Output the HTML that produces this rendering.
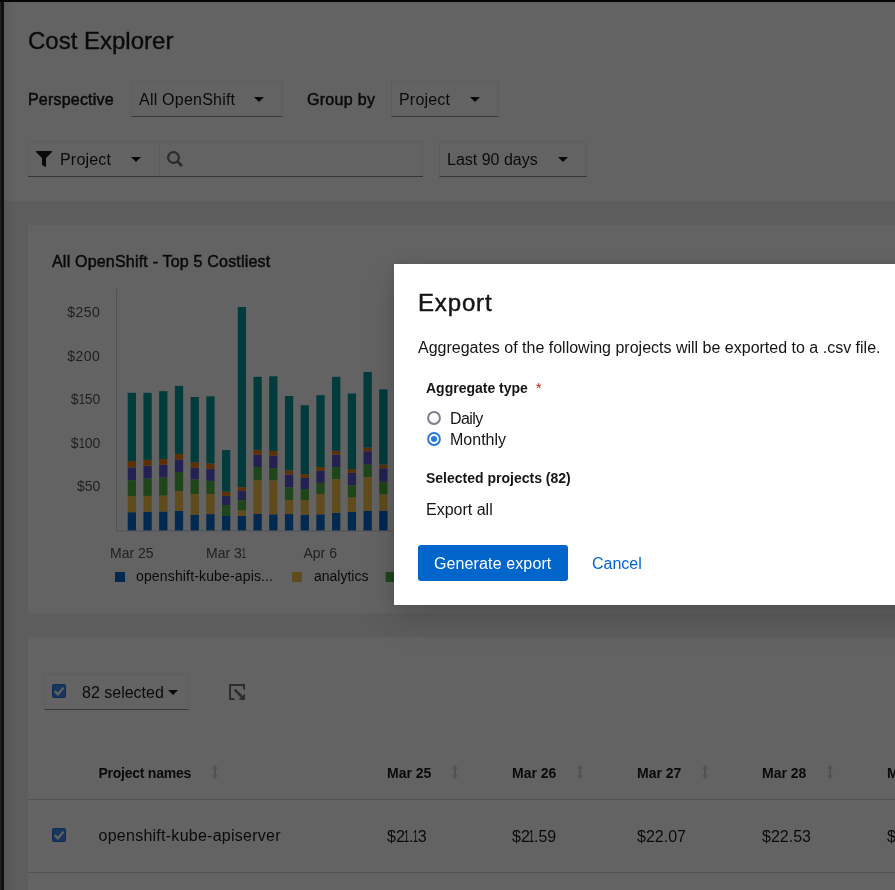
<!DOCTYPE html>
<html><head><meta charset="utf-8">
<style>
html,body{margin:0;padding:0;}
body{width:895px;height:890px;overflow:hidden;position:relative;background:#f0f0f0;font-family:"Liberation Sans",sans-serif;color:#151515;}
.a{position:absolute;white-space:nowrap;line-height:1;}
.hdr{position:absolute;left:0;top:0;width:895px;height:201px;background:#fff;}
.card{position:absolute;background:#fff;}
.sel{position:absolute;box-sizing:border-box;border:1px solid #f0f0f0;border-bottom-color:#8a8d90;background:#fff;}
.caret{position:absolute;width:0;height:0;border-left:5px solid transparent;border-right:5px solid transparent;border-top:5px solid #151515;}
.f16{font-size:16px;}
.f14{font-size:14px;}
.b{font-weight:700;}
.m{-webkit-text-stroke:0.5px #151515;}
i.o{font-style:normal;display:inline-block;transform:scaleX(0.62);margin:0 -2.35px;}
i.o1{font-style:normal;display:inline-block;transform:scaleX(0.8);margin:0 -0.75px;}
i.o2{font-style:normal;display:inline-block;transform:scaleX(0.6);margin:0 -2.2px;}
#overlay{position:absolute;left:0;top:0;width:895px;height:890px;background:rgba(3,3,3,0.62);}
.modal{position:absolute;left:394px;top:264px;width:600px;height:341px;background:#fff;box-shadow:0 16px 32px 0 rgba(3,3,3,0.16),0 0 8px 0 rgba(3,3,3,0.1);}
.axl{fill:#4f5255;font-size:14px;font-family:"Liberation Sans",sans-serif;}
</style></head><body>
<div id="root" style="position:absolute;left:0;top:0;width:895px;height:890px;overflow:hidden;will-change:transform;">
<div class="hdr"></div>
<div class="a" style="left:28px;top:29.2px;font-size:24px;-webkit-text-stroke:0.35px #151515;">Cost Explorer</div>
<div class="a f16 m" style="left:28px;top:91.8px;letter-spacing:0.2px;">Perspective</div>
<div class="sel" style="left:131px;top:81px;width:152px;height:36px;"></div>
<div class="a f16" style="left:139px;top:92.1px;letter-spacing:0.22px;">All OpenShift</div>
<div class="caret" style="left:254px;top:97px;"></div>
<div class="a f16 m" style="left:307px;top:91.8px;letter-spacing:0.3px;">Group by</div>
<div class="sel" style="left:391px;top:81px;width:108px;height:36px;"></div>
<div class="a f16" style="left:399px;top:92.1px;letter-spacing:0.2px;">Project</div>
<div class="caret" style="left:470px;top:97px;"></div>

<div class="sel" style="left:28px;top:141px;width:132px;height:36px;"></div>
<svg style="position:absolute;left:36px;top:151px" width="16" height="16" viewBox="0 0 512 512"><path fill="#151515" d="M487.976 0H24.028C2.71 0-8.047 25.866 7.058 40.971L192 225.941V432c0 7.831 3.821 15.17 10.237 19.662l80 55.98C298.02 518.69 320 507.493 320 487.98V225.941l184.947-184.97C520.021 25.896 509.338 0 487.976 0z"/></svg>
<div class="a f16" style="left:60px;top:152.1px;letter-spacing:0.2px;">Project</div>
<div class="caret" style="left:131px;top:157px;"></div>
<div class="sel" style="left:159px;top:141px;width:264px;height:36px;"></div>
<svg style="position:absolute;left:166px;top:150px" width="18" height="18" viewBox="0 0 18 18"><circle cx="7.5" cy="7.5" r="5.4" fill="none" stroke="#6a6e73" stroke-width="2.2"/><path d="M11.3 11.3L16 16" stroke="#6a6e73" stroke-width="2.8"/></svg>
<div style="position:absolute;left:28px;top:176px;width:395px;height:1px;background:#8a8d90;"></div>
<div class="sel" style="left:439px;top:141px;width:148px;height:36px;"></div>
<div class="a f16" style="left:447px;top:152.1px;">Last 90 days</div>
<div class="caret" style="left:558px;top:157px;"></div>

<div class="card" style="left:28px;top:225px;width:900px;height:388px;"></div>
<div class="a f16 m" style="left:52px;top:253.8px;letter-spacing:0.2px;">All OpenShift - Top 5 Costliest</div>
<svg style="position:absolute;left:0;top:0" width="895" height="890">
<line x1="116.5" y1="289" x2="116.5" y2="531" stroke="#d2d2d2" stroke-width="1"/>
<line x1="116" y1="530.9" x2="400" y2="530.9" stroke="#d2d2d2" stroke-width="1"/>
<rect x="127.70" y="512.20" width="8.3" height="18.20" fill="#06c"/>
<rect x="127.70" y="496.10" width="8.3" height="16.10" fill="#f4c145"/>
<rect x="127.70" y="480.20" width="8.3" height="15.90" fill="#4cb140"/>
<rect x="127.70" y="467.40" width="8.3" height="12.80" fill="#5752d1"/>
<rect x="127.70" y="461.00" width="8.3" height="6.40" fill="#ec7a08"/>
<rect x="127.70" y="392.80" width="8.3" height="68.20" fill="#009596"/>
<rect x="143.42" y="511.70" width="8.3" height="18.70" fill="#06c"/>
<rect x="143.42" y="495.90" width="8.3" height="15.80" fill="#f4c145"/>
<rect x="143.42" y="478.40" width="8.3" height="17.50" fill="#4cb140"/>
<rect x="143.42" y="465.70" width="8.3" height="12.70" fill="#5752d1"/>
<rect x="143.42" y="459.90" width="8.3" height="5.80" fill="#ec7a08"/>
<rect x="143.42" y="392.80" width="8.3" height="67.10" fill="#009596"/>
<rect x="159.14" y="511.50" width="8.3" height="18.90" fill="#06c"/>
<rect x="159.14" y="495.60" width="8.3" height="15.90" fill="#f4c145"/>
<rect x="159.14" y="477.40" width="8.3" height="18.20" fill="#4cb140"/>
<rect x="159.14" y="464.70" width="8.3" height="12.70" fill="#5752d1"/>
<rect x="159.14" y="458.90" width="8.3" height="5.80" fill="#ec7a08"/>
<rect x="159.14" y="391.20" width="8.3" height="67.70" fill="#009596"/>
<rect x="174.86" y="510.90" width="8.3" height="19.50" fill="#06c"/>
<rect x="174.86" y="491.00" width="8.3" height="19.90" fill="#f4c145"/>
<rect x="174.86" y="472.10" width="8.3" height="18.90" fill="#4cb140"/>
<rect x="174.86" y="459.70" width="8.3" height="12.40" fill="#5752d1"/>
<rect x="174.86" y="453.90" width="8.3" height="5.80" fill="#ec7a08"/>
<rect x="174.86" y="385.90" width="8.3" height="68.00" fill="#009596"/>
<rect x="190.58" y="514.60" width="8.3" height="15.80" fill="#06c"/>
<rect x="190.58" y="494.00" width="8.3" height="20.60" fill="#f4c145"/>
<rect x="190.58" y="479.40" width="8.3" height="14.60" fill="#4cb140"/>
<rect x="190.58" y="467.80" width="8.3" height="11.60" fill="#5752d1"/>
<rect x="190.58" y="462.20" width="8.3" height="5.60" fill="#ec7a08"/>
<rect x="190.58" y="397.00" width="8.3" height="65.20" fill="#009596"/>
<rect x="206.30" y="514.10" width="8.3" height="16.30" fill="#06c"/>
<rect x="206.30" y="494.00" width="8.3" height="20.10" fill="#f4c145"/>
<rect x="206.30" y="480.90" width="8.3" height="13.10" fill="#4cb140"/>
<rect x="206.30" y="468.80" width="8.3" height="12.10" fill="#5752d1"/>
<rect x="206.30" y="463.50" width="8.3" height="5.30" fill="#ec7a08"/>
<rect x="206.30" y="396.30" width="8.3" height="67.20" fill="#009596"/>
<rect x="222.02" y="516.00" width="8.3" height="14.40" fill="#06c"/>
<rect x="222.02" y="505.00" width="8.3" height="11.00" fill="#4cb140"/>
<rect x="222.02" y="495.90" width="8.3" height="9.10" fill="#5752d1"/>
<rect x="222.02" y="491.50" width="8.3" height="4.40" fill="#ec7a08"/>
<rect x="222.02" y="450.10" width="8.3" height="41.40" fill="#009596"/>
<rect x="237.74" y="516.00" width="8.3" height="14.40" fill="#06c"/>
<rect x="237.74" y="510.30" width="8.3" height="5.70" fill="#f4c145"/>
<rect x="237.74" y="500.20" width="8.3" height="10.10" fill="#4cb140"/>
<rect x="237.74" y="490.80" width="8.3" height="9.40" fill="#5752d1"/>
<rect x="237.74" y="487.10" width="8.3" height="3.70" fill="#ec7a08"/>
<rect x="237.74" y="307.00" width="8.3" height="180.10" fill="#009596"/>
<rect x="253.46" y="514.00" width="8.3" height="16.40" fill="#06c"/>
<rect x="253.46" y="480.10" width="8.3" height="33.90" fill="#f4c145"/>
<rect x="253.46" y="467.00" width="8.3" height="13.10" fill="#4cb140"/>
<rect x="253.46" y="454.80" width="8.3" height="12.20" fill="#5752d1"/>
<rect x="253.46" y="449.90" width="8.3" height="4.90" fill="#ec7a08"/>
<rect x="253.46" y="376.80" width="8.3" height="73.10" fill="#009596"/>
<rect x="269.18" y="514.30" width="8.3" height="16.10" fill="#06c"/>
<rect x="269.18" y="480.40" width="8.3" height="33.90" fill="#f4c145"/>
<rect x="269.18" y="468.10" width="8.3" height="12.30" fill="#4cb140"/>
<rect x="269.18" y="455.60" width="8.3" height="12.50" fill="#5752d1"/>
<rect x="269.18" y="450.90" width="8.3" height="4.70" fill="#ec7a08"/>
<rect x="269.18" y="376.30" width="8.3" height="74.60" fill="#009596"/>
<rect x="284.90" y="514.10" width="8.3" height="16.30" fill="#06c"/>
<rect x="284.90" y="499.90" width="8.3" height="14.20" fill="#f4c145"/>
<rect x="284.90" y="487.30" width="8.3" height="12.60" fill="#4cb140"/>
<rect x="284.90" y="474.60" width="8.3" height="12.70" fill="#5752d1"/>
<rect x="284.90" y="470.30" width="8.3" height="4.30" fill="#ec7a08"/>
<rect x="284.90" y="396.00" width="8.3" height="74.30" fill="#009596"/>
<rect x="300.62" y="514.60" width="8.3" height="15.80" fill="#06c"/>
<rect x="300.62" y="500.10" width="8.3" height="14.50" fill="#f4c145"/>
<rect x="300.62" y="489.00" width="8.3" height="11.10" fill="#4cb140"/>
<rect x="300.62" y="477.90" width="8.3" height="11.10" fill="#5752d1"/>
<rect x="300.62" y="474.10" width="8.3" height="3.80" fill="#ec7a08"/>
<rect x="300.62" y="405.20" width="8.3" height="68.90" fill="#009596"/>
<rect x="316.34" y="514.30" width="8.3" height="16.10" fill="#06c"/>
<rect x="316.34" y="494.00" width="8.3" height="20.30" fill="#f4c145"/>
<rect x="316.34" y="482.90" width="8.3" height="11.10" fill="#4cb140"/>
<rect x="316.34" y="470.80" width="8.3" height="12.10" fill="#5752d1"/>
<rect x="316.34" y="467.00" width="8.3" height="3.80" fill="#ec7a08"/>
<rect x="316.34" y="395.20" width="8.3" height="71.80" fill="#009596"/>
<rect x="332.06" y="512.80" width="8.3" height="17.60" fill="#06c"/>
<rect x="332.06" y="479.10" width="8.3" height="33.70" fill="#f4c145"/>
<rect x="332.06" y="467.00" width="8.3" height="12.10" fill="#4cb140"/>
<rect x="332.06" y="454.60" width="8.3" height="12.40" fill="#5752d1"/>
<rect x="332.06" y="450.90" width="8.3" height="3.70" fill="#ec7a08"/>
<rect x="332.06" y="376.80" width="8.3" height="74.10" fill="#009596"/>
<rect x="347.78" y="512.00" width="8.3" height="18.40" fill="#06c"/>
<rect x="347.78" y="497.40" width="8.3" height="14.60" fill="#f4c145"/>
<rect x="347.78" y="485.20" width="8.3" height="12.20" fill="#4cb140"/>
<rect x="347.78" y="472.90" width="8.3" height="12.30" fill="#5752d1"/>
<rect x="347.78" y="469.00" width="8.3" height="3.90" fill="#ec7a08"/>
<rect x="347.78" y="393.50" width="8.3" height="75.50" fill="#009596"/>
<rect x="363.50" y="511.00" width="8.3" height="19.40" fill="#06c"/>
<rect x="363.50" y="477.10" width="8.3" height="33.90" fill="#f4c145"/>
<rect x="363.50" y="464.30" width="8.3" height="12.80" fill="#4cb140"/>
<rect x="363.50" y="451.20" width="8.3" height="13.10" fill="#5752d1"/>
<rect x="363.50" y="447.50" width="8.3" height="3.70" fill="#ec7a08"/>
<rect x="363.50" y="372.00" width="8.3" height="75.50" fill="#009596"/>
<rect x="379.22" y="510.70" width="8.3" height="19.70" fill="#06c"/>
<rect x="379.22" y="494.40" width="8.3" height="16.30" fill="#f4c145"/>
<rect x="379.22" y="481.80" width="8.3" height="12.60" fill="#4cb140"/>
<rect x="379.22" y="468.30" width="8.3" height="13.50" fill="#5752d1"/>
<rect x="379.22" y="464.60" width="8.3" height="3.70" fill="#ec7a08"/>
<rect x="379.22" y="389.30" width="8.3" height="75.30" fill="#009596"/>

<rect x="115" y="572" width="10" height="10" fill="#06c"/>
<rect x="292" y="572" width="10" height="10" fill="#f4c145"/>
<rect x="385.6" y="572" width="10" height="10" fill="#4cb140"/>
<text x="136" y="581.4" letter-spacing="0.15" style="font-size:14px;font-family:'Liberation Sans';fill:#151515">openshift-kube-apis...</text>
<text x="314" y="581.4" style="font-size:14px;font-family:'Liberation Sans';fill:#151515">analytics</text>
</svg>


<div class="a f14" style="right:794.6px;top:305.15px;text-align:right;color:#4f5255;letter-spacing:0.5px;">$250</div>
<div class="a f14" style="right:794.6px;top:348.85px;text-align:right;color:#4f5255;letter-spacing:0.5px;">$200</div>
<div class="a f14" style="right:794.6px;top:392.45px;text-align:right;color:#4f5255;">$<i class="o1">1</i>50</div>
<div class="a f14" style="right:794.6px;top:435.55px;text-align:right;color:#4f5255;">$<i class="o1">1</i>00</div>
<div class="a f14" style="right:794.6px;top:479.05px;text-align:right;color:#4f5255;">$50</div>
<div class="a f14" style="left:110px;top:545.95px;color:#4f5255;">Mar 25</div>
<div class="a f14" style="left:206px;top:545.95px;color:#4f5255;">Mar 3<i class="o2">1</i></div>
<div class="a f14" style="left:303.5px;top:545.95px;color:#4f5255;">Apr 6</div>
<div class="card" style="left:28px;top:637px;width:900px;height:300px;"></div>
<div class="sel" style="left:44px;top:674px;width:145px;height:36px;"></div>
<svg style="position:absolute;left:52px;top:684px" width="14" height="14" viewBox="0 0 14 14"><rect x="0.5" y="0.5" width="13" height="13" rx="1.5" fill="#3a88f0" stroke="#1f6fd8" stroke-width="1"/><path d="M2.7 7.1L5.9 10.3L11.5 3.6" fill="none" stroke="#fff" stroke-width="2.2"/></svg>
<div class="a f16" style="left:82px;top:684.7px;">82 selected</div>
<div class="caret" style="left:168px;top:690px;"></div>
<svg style="position:absolute;left:229px;top:684px" width="16" height="16" viewBox="0 0 16 16"><path d="M0 0H16V6.6L14 4.6V2H2V14H4.6L6.6 16H0Z" fill="#6a6e73"/><path d="M6.4 6.4L12.5 12.5" stroke="#6a6e73" stroke-width="2.6" stroke-linecap="round"/><path d="M16 9.6V16H9.6Z" fill="#6a6e73"/></svg>

<div class="a f14 b" style="left:98.5px;top:766.4px;letter-spacing:-0.25px;">Project names</div>
<div class="a f14 b" style="left:387px;top:766.4px;">Mar 25</div>
<div class="a f14 b" style="left:512px;top:766.4px;">Mar 26</div>
<div class="a f14 b" style="left:637px;top:766.4px;">Mar 27</div>
<div class="a f14 b" style="left:762px;top:766.4px;">Mar 28</div>
<div class="a f14 b" style="left:887px;top:766.4px;">Mar 29</div>
<svg style="position:absolute;left:212px;top:765px" width="6" height="14" viewBox="0 0 6 14"><path d="M3 0L6 3.7H4V10.3H6L3 14L0 10.3H2V3.7H0Z" fill="#d2d2d2"/></svg>
<svg style="position:absolute;left:452px;top:765px" width="6" height="14" viewBox="0 0 6 14"><path d="M3 0L6 3.7H4V10.3H6L3 14L0 10.3H2V3.7H0Z" fill="#d2d2d2"/></svg>
<svg style="position:absolute;left:577px;top:765px" width="6" height="14" viewBox="0 0 6 14"><path d="M3 0L6 3.7H4V10.3H6L3 14L0 10.3H2V3.7H0Z" fill="#d2d2d2"/></svg>
<svg style="position:absolute;left:702px;top:765px" width="6" height="14" viewBox="0 0 6 14"><path d="M3 0L6 3.7H4V10.3H6L3 14L0 10.3H2V3.7H0Z" fill="#d2d2d2"/></svg>
<svg style="position:absolute;left:827px;top:765px" width="6" height="14" viewBox="0 0 6 14"><path d="M3 0L6 3.7H4V10.3H6L3 14L0 10.3H2V3.7H0Z" fill="#d2d2d2"/></svg>
<svg style="position:absolute;left:952px;top:765px" width="6" height="14" viewBox="0 0 6 14"><path d="M3 0L6 3.7H4V10.3H6L3 14L0 10.3H2V3.7H0Z" fill="#d2d2d2"/></svg>
<div style="position:absolute;left:28px;top:799px;width:900px;height:1px;background:#d2d2d2;"></div>
<svg style="position:absolute;left:52px;top:828px" width="14" height="14" viewBox="0 0 14 14"><rect x="0.5" y="0.5" width="13" height="13" rx="1.5" fill="#3a88f0" stroke="#1f6fd8" stroke-width="1"/><path d="M2.7 7.1L5.9 10.3L11.5 3.6" fill="none" stroke="#fff" stroke-width="2.2"/></svg>
<div class="a f16" style="left:98.5px;top:828.2px;letter-spacing:0.26px;">openshift-kube-apiserver</div>
<div class="a f16" style="left:387px;top:829.1px;">$2<i class="o">1</i>.<i class="o">1</i>3</div>
<div class="a f16" style="left:512px;top:829.1px;">$2<i class="o">1</i>.59</div>
<div class="a f16" style="left:637px;top:829.1px;">$22.07</div>
<div class="a f16" style="left:762px;top:829.1px;">$22.53</div>
<div class="a f16" style="left:887px;top:829.1px;">$22.99</div>
<div style="position:absolute;left:28px;top:872px;width:900px;height:1px;background:#d2d2d2;"></div>

<div id="overlay"></div>
<div style="position:absolute;left:0;top:0;width:895px;height:2px;background:#050505;"></div>
<div style="position:absolute;left:0;top:2px;width:4px;height:888px;background:linear-gradient(to right,#222 0,#222 1.3px,#111 1.3px);"></div>
<div style="position:absolute;left:4px;top:2px;width:14px;height:888px;background:linear-gradient(to right,rgba(0,0,0,0.07),rgba(0,0,0,0));"></div>

<div class="modal">
</div>
<div class="a" style="left:418px;top:291.3px;font-size:24px;letter-spacing:0.85px;-webkit-text-stroke:0.45px #151515;">Export</div>
<div class="a f16" style="left:418px;top:340px;">Aggregates of the following projects will be exported to a .csv file.</div>
<div class="a f14 b" style="left:426px;top:381.2px;">Aggregate type</div>
<div class="a f14" style="left:536px;top:381.2px;color:#c9190b;">*</div>
<svg style="position:absolute;left:426px;top:410px" width="16" height="16" viewBox="0 0 16 16"><circle cx="8" cy="8" r="5.9" fill="#fff" stroke="#7d7d8c" stroke-width="2"/></svg>
<div class="a f16" style="left:450px;top:411.3px;letter-spacing:-0.6px;">Daily</div>
<svg style="position:absolute;left:426px;top:431px" width="16" height="16" viewBox="0 0 16 16"><circle cx="8" cy="8" r="5.9" fill="#fff" stroke="#2878e1" stroke-width="2"/><circle cx="8" cy="8" r="3" fill="#2878e1"/></svg>
<div class="a f16" style="left:450px;top:431.6px;">Monthly</div>
<div class="a f14 b" style="left:426px;top:471.3px;">Selected projects (82)</div>
<div class="a f16" style="left:426px;top:502.4px;">Export all</div>
<div style="position:absolute;left:418px;top:545px;width:150px;height:36px;background:#06c;border-radius:3px;"></div>
<div class="a f16" style="left:434px;top:555.9px;color:#fff;letter-spacing:0.12px;">Generate export</div>
<div class="a f16" style="left:592px;top:555.9px;color:#06c;">Cancel</div>
</div>
</body></html>
